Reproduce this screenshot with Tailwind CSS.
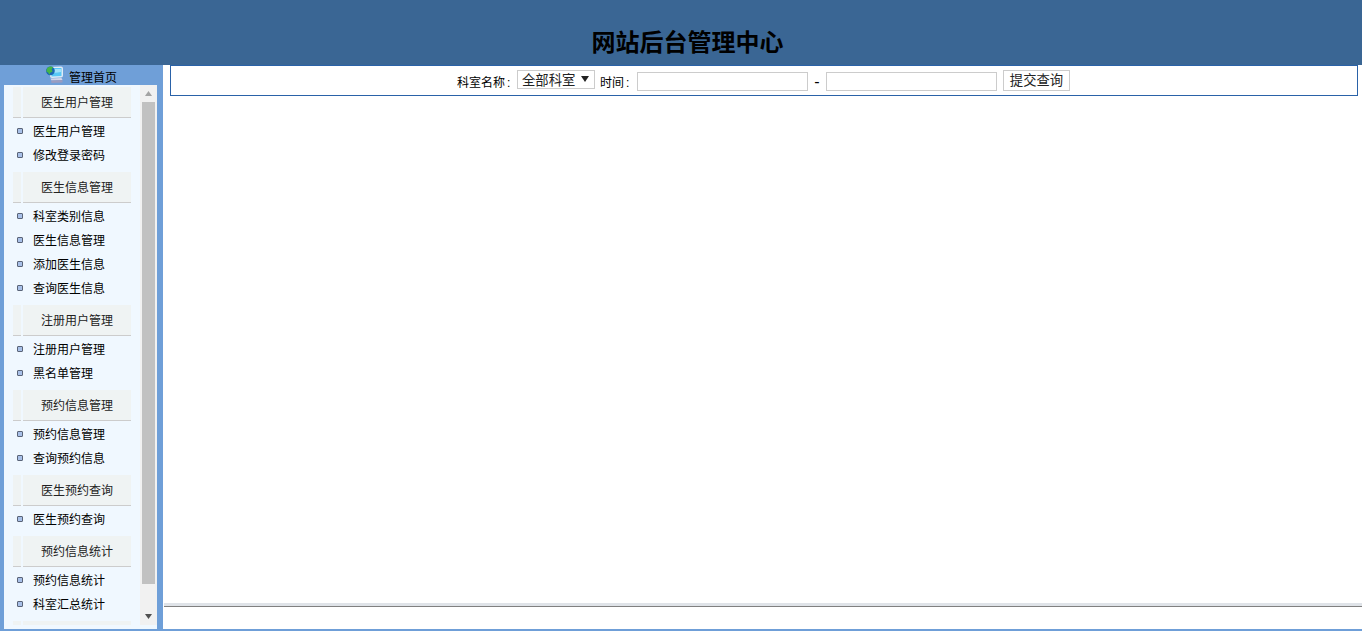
<!DOCTYPE html>
<html lang="zh">
<head>
<meta charset="utf-8">
<title>网站后台管理中心</title>
<script src="https://cdn.jsdelivr.net/npm/@tailwindcss/browser@4"></script>
</head>
<body class="h-[631px] w-[1362px] overflow-hidden bg-white text-black font-['Liberation_Sans','Noto_Sans_CJK_SC',sans-serif] text-xs">
<header class="h-[65px] bg-[#3a6694] flex items-end justify-center pb-[5px] pl-[13px]">
  <h1 class="text-[24px] leading-[34px] font-bold text-black">网站后台管理中心</h1>
</header>
<div class="flex h-[566px]">
  <aside class="w-[163px] shrink-0 bg-[#6f9fd8] flex flex-col">
    <div class="h-[20px] flex items-start pl-[46px] pt-px">
      <svg width="17" height="18" viewBox="0 0 17 18" class="shrink-0">
        <path d="M4 1 L15 0.5 Q17 0.5 17 2.5 L17 9.5 Q17 11.5 15 11.5 L6 12 Q4 12 4 10 Z" fill="#dfeaf6"/>
        <path d="M5.5 2 L15.5 2 L15.5 10 L5.5 10.5 Z" fill="#58c8f6"/>
        <path d="M8 3 L15 3 L15 6 L8 7 Z" fill="#9fe2fb"/>
        <circle cx="4.4" cy="4.8" r="4.4" fill="#1b68b4"/>
        <path d="M1 2.4 C2.6 0.2 5.6 0 7 1 L5.6 3.4 L6.6 5.4 L4.2 6.8 L3.6 8.8 L2 6.6 L0.3 5.6 Z" fill="#45b548"/>
        <path d="M4.5 12.5 L15.5 12 L16.5 14 L5.5 14.5 Z" fill="#d3d6ea"/>
        <path d="M5 14.5 L16.5 14 L16.5 16.5 L5.5 17 Z" fill="#9a9cc0"/>
      </svg>
      <span class="ml-[6px] mt-[4px] leading-[16px]">管理首页</span>
    </div>
    <div class="ml-1 w-[153px] h-[544px] bg-[#f0f8ff]">
      <div class="h-[540px] flex">
        <nav class="w-[136px] overflow-hidden pt-[2px] pl-[9px]">
          <div class="flex gap-[2px] h-[31px] mb-px">
            <div class="w-2 bg-[#eff3f3] border-b border-[#cccccc]"></div>
            <div class="w-[108px] bg-[#eff3f3] border-b border-[#cccccc] pl-[18px] leading-[32px] text-[#222222]">医生用户管理</div>
          </div>
          <ul class="mb-[5px]">
            <li class="h-6 flex items-start gap-[10px] pl-1 leading-[26px]"><span class="w-[6px] h-[6px] mt-[9px] rounded-[1px] bg-[#a8c0e8] border border-[#5a6478]"></span>医生用户管理</li>
            <li class="h-6 flex items-start gap-[10px] pl-1 leading-[26px]"><span class="w-[6px] h-[6px] mt-[9px] rounded-[1px] bg-[#a8c0e8] border border-[#5a6478]"></span>修改登录密码</li>
          </ul>
          <div class="flex gap-[2px] h-[31px] mb-px">
            <div class="w-2 bg-[#eff3f3] border-b border-[#cccccc]"></div>
            <div class="w-[108px] bg-[#eff3f3] border-b border-[#cccccc] pl-[18px] leading-[32px] text-[#222222]">医生信息管理</div>
          </div>
          <ul class="mb-[5px]">
            <li class="h-6 flex items-start gap-[10px] pl-1 leading-[26px]"><span class="w-[6px] h-[6px] mt-[9px] rounded-[1px] bg-[#a8c0e8] border border-[#5a6478]"></span>科室类别信息</li>
            <li class="h-6 flex items-start gap-[10px] pl-1 leading-[26px]"><span class="w-[6px] h-[6px] mt-[9px] rounded-[1px] bg-[#a8c0e8] border border-[#5a6478]"></span>医生信息管理</li>
            <li class="h-6 flex items-start gap-[10px] pl-1 leading-[26px]"><span class="w-[6px] h-[6px] mt-[9px] rounded-[1px] bg-[#a8c0e8] border border-[#5a6478]"></span>添加医生信息</li>
            <li class="h-6 flex items-start gap-[10px] pl-1 leading-[26px]"><span class="w-[6px] h-[6px] mt-[9px] rounded-[1px] bg-[#a8c0e8] border border-[#5a6478]"></span>查询医生信息</li>
          </ul>
          <div class="flex gap-[2px] h-[31px] mb-px">
            <div class="w-2 bg-[#eff3f3] border-b border-[#cccccc]"></div>
            <div class="w-[108px] bg-[#eff3f3] border-b border-[#cccccc] pl-[18px] leading-[32px] text-[#222222]">注册用户管理</div>
          </div>
          <ul class="mb-[5px]">
            <li class="h-6 flex items-start gap-[10px] pl-1 leading-[26px]"><span class="w-[6px] h-[6px] mt-[9px] rounded-[1px] bg-[#a8c0e8] border border-[#5a6478]"></span>注册用户管理</li>
            <li class="h-6 flex items-start gap-[10px] pl-1 leading-[26px]"><span class="w-[6px] h-[6px] mt-[9px] rounded-[1px] bg-[#a8c0e8] border border-[#5a6478]"></span>黑名单管理</li>
          </ul>
          <div class="flex gap-[2px] h-[31px] mb-px">
            <div class="w-2 bg-[#eff3f3] border-b border-[#cccccc]"></div>
            <div class="w-[108px] bg-[#eff3f3] border-b border-[#cccccc] pl-[18px] leading-[32px] text-[#222222]">预约信息管理</div>
          </div>
          <ul class="mb-[5px]">
            <li class="h-6 flex items-start gap-[10px] pl-1 leading-[26px]"><span class="w-[6px] h-[6px] mt-[9px] rounded-[1px] bg-[#a8c0e8] border border-[#5a6478]"></span>预约信息管理</li>
            <li class="h-6 flex items-start gap-[10px] pl-1 leading-[26px]"><span class="w-[6px] h-[6px] mt-[9px] rounded-[1px] bg-[#a8c0e8] border border-[#5a6478]"></span>查询预约信息</li>
          </ul>
          <div class="flex gap-[2px] h-[31px] mb-px">
            <div class="w-2 bg-[#eff3f3] border-b border-[#cccccc]"></div>
            <div class="w-[108px] bg-[#eff3f3] border-b border-[#cccccc] pl-[18px] leading-[32px] text-[#222222]">医生预约查询</div>
          </div>
          <ul class="mb-[5px]">
            <li class="h-6 flex items-start gap-[10px] pl-1 leading-[26px]"><span class="w-[6px] h-[6px] mt-[9px] rounded-[1px] bg-[#a8c0e8] border border-[#5a6478]"></span>医生预约查询</li>
          </ul>
          <div class="flex gap-[2px] h-[31px] mb-px">
            <div class="w-2 bg-[#eff3f3] border-b border-[#cccccc]"></div>
            <div class="w-[108px] bg-[#eff3f3] border-b border-[#cccccc] pl-[18px] leading-[32px] text-[#222222]">预约信息统计</div>
          </div>
          <ul class="mb-[5px]">
            <li class="h-6 flex items-start gap-[10px] pl-1 leading-[26px]"><span class="w-[6px] h-[6px] mt-[9px] rounded-[1px] bg-[#a8c0e8] border border-[#5a6478]"></span>预约信息统计</li>
            <li class="h-6 flex items-start gap-[10px] pl-1 leading-[26px]"><span class="w-[6px] h-[6px] mt-[9px] rounded-[1px] bg-[#a8c0e8] border border-[#5a6478]"></span>科室汇总统计</li>
          </ul>
          <div class="flex gap-[2px] h-[31px]">
            <div class="w-2 bg-[#eff3f3]"></div>
            <div class="w-[108px] bg-[#eff3f3]"></div>
          </div>
        </nav>
        <div class="w-[17px] bg-[#f1f1f1] flex flex-col items-center">
          <div class="h-[17px] w-full flex items-center justify-center">
            <svg width="9" height="5" viewBox="0 0 9 5"><path d="M4.5 0 L8 5 L1 5 Z" fill="#a3a3a3"/></svg>
          </div>
          <div class="w-[13px] h-[482px] bg-[#c1c1c1]"></div>
          <div class="flex-1"></div>
          <div class="h-[17px] w-full flex items-center justify-center">
            <svg width="9" height="5" viewBox="0 0 9 5"><path d="M1 0 L8 0 L4.5 5 Z" fill="#505050"/></svg>
          </div>
        </div>
      </div>
    </div>
  </aside>
  <main class="flex-1 flex flex-col">
    <form class="ml-[7px] w-[1188px] h-[31px] border border-[#2a62a8] flex items-start justify-center pt-[4px] pr-px">
      <span class="w-[53px] mt-[5px] leading-4 whitespace-nowrap">科室名称<span class="ml-[2px]">:</span></span>
      <div class="relative ml-[7px] h-[19px] w-[78px]">
        <select class="appearance-none h-[19px] w-[78px] border border-[#cccccc] bg-white pl-1 pt-[2px] text-[13.33px] leading-[15px] text-[#222222]">
          <option>全部科室</option>
        </select>
        <svg width="8" height="6" viewBox="0 0 8 6" class="absolute right-[6px] top-[6px] pointer-events-none"><path d="M0 0 L8 0 L4 6 Z" fill="#222222"/></svg>
      </div>
      <span class="w-[29px] ml-[5px] mt-[5px] leading-4 whitespace-nowrap">时间<span class="ml-[2px]">:</span></span>
      <input type="text" class="ml-[8px] mt-[2px] h-[19px] w-[171px] border border-[#cccccc] bg-white">
      <span class="w-[18px] text-center mt-[4px] leading-4 text-[16px]">-</span>
      <input type="text" class="mt-[2px] h-[19px] w-[171px] border border-[#cccccc] bg-white">
      <button type="button" class="ml-[6px] h-[21px] w-[67px] border border-[#cccccc] bg-white text-[13.33px] pt-px leading-[18px] text-[#222222]">提交查询</button>
    </form>
    <div class="flex-1"></div>
    <div class="h-[3px] ml-px bg-[#dfe3e8]"></div>
    <div class="h-px ml-px bg-[#808080]"></div>
    <div class="h-[22px]"></div>
    <div class="h-[2px] bg-[#6f9fd8]"></div>
  </main>
</div>
</body>
</html>
